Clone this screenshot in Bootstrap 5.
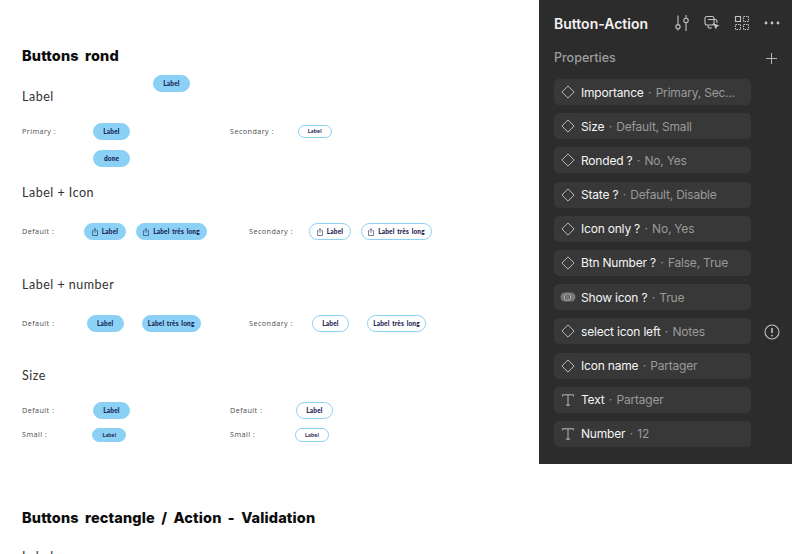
<!DOCTYPE html>
<html lang="fr">
<head>
  <meta charset="UTF-8"/>
  <meta name="viewport" content="width=device-width, initial-scale=1"/>
  <title>Button-Action</title>
  <link href="https://cdn.jsdelivr.net/npm/bootstrap@5.3.0/dist/css/bootstrap.min.css" rel="stylesheet">
  <style>
    html, body { height: 554px; overflow: hidden; background: #fff; }
    body { font-family: "Lato", "Liberation Sans", sans-serif; color: #333; }
    .board { width: 539px; padding: 47px 0 0 22px; flex: none; }

    /* headings */
    .sec-title { font-family: "Inter", "Liberation Sans", sans-serif; font-size: 14.5px; line-height: 18px; font-weight: 800; color: #0c0c0c; margin: 0; letter-spacing: .15px; word-spacing: 3px; }
    .sub-title { font-size: 12.5px; line-height: 16px; font-weight: 400; color: #333; margin: 0; letter-spacing: .5px; }
    .cap { font-family: "Open Sans", "Liberation Sans", sans-serif; font-size: 7.2px; font-weight: 400; color: #4c4c4c; letter-spacing: .45px; white-space: nowrap; }

    /* vertical rhythm of the board */
    .mt-10 { margin-top: 10px; }
    .mt-18 { margin-top: 18px; }
    .mt-19 { margin-top: 19px; }
    .mt-22 { margin-top: 22px; }
    .mt-37 { margin-top: 37px; }
    .mt-36 { margin-top: 36px; }
    .mt-9 { margin-top: 9px; }
    .mt-67 { margin-top: 67px; }
    .float-row { height: 30px; }
    .float-btn { margin-left: 95px; }
    .lbl-col { width: 36px; }

    /* column widths */
    .grp-a { width: 208px; }
    .grp-b { width: 227px; }
    .lc-71 { width: 71px; }
    .lc-70 { width: 70.3px; }
    .lc-62 { width: 62px; }
    .lc-65 { width: 64.7px; }
    .lc-68 { width: 68px; }
    .lc-60 { width: 60px; }
    .lc-63 { width: 63px; }
    .lc-66 { width: 66px; }
    .lc-65b { width: 65px; }
    .gap-10 { gap: 10px; }
    .gap-18 { gap: 18px; }

    /* pills */
    .pill { display: inline-flex; align-items: center; justify-content: center; gap: 4px; height: 17px; padding: 0; border-radius: 9px; font-size: 6.5px; font-weight: 900; letter-spacing: .15px; word-spacing: 1px; color: #1a2050; border: 1px solid #8ad1f5; white-space: nowrap; flex: none; }
    .pill:hover, .pill:active { color: #1a2050; }
    .pill-fill, .pill-fill:hover { background: #8ad1f5; }
    .pill-line, .pill-line:hover { background: #fff; }
    .pill-sm { height: 13.5px; font-size: 5.5px; font-weight: 700; border-radius: 7px; }
    .bw-37 { width: 37px; }
    .bw-33 { width: 33.5px; }
    .bw-34 { width: 34px; }
    .bw-42 { width: 42px; }
    .bw-71 { width: 71px; }
    .bw-59 { width: 59px; }
    .pill svg { width: 6px; height: 8px; }

    /* right panel */
    .panel { width: 253px; height: 464px; background: #2c2c2c; flex: none; padding: 0 15px; font-family: "Inter", "Liberation Sans", sans-serif; }
    .panel-head { height: 48px; padding-bottom: 2px; margin-right: -4px; }
    .panel-name { font-size: 14px; font-weight: 600; color: #f2f2f2; width: 119px; flex: none; }
    .head-ic { color: #c4c4c4; width: 18px; height: 18px; flex: none; }
    .head-gap { gap: 12px; }
    .panel-sub { height: 20px; font-size: 12.5px; font-weight: 500; color: #9d9d9d; margin-bottom: 11px; }
    .plus-ic { width: 13px; height: 13px; color: #b5b5b5; margin-right: -1px; }
    .prop-list { gap: 8.2px; width: 197px; }
    .prop-row { height: 26px; background: #383838; border-radius: 5px; padding-left: 6px; font-size: 12px; font-weight: 400; letter-spacing: -.2px; color: #f5f5f5; white-space: nowrap; position: relative; }
    .prop-txt { padding-top: 1px; }
    .prop-dot { color: #9a9a9a; padding-top: 1px; width: 12px; text-align: center; flex: none; }
    .prop-ic { width: 16px; height: 16px; color: #b8b8b8; margin-right: 5px; flex: none; }
    .prop-val { color: #9a9a9a; }
    .warn-ic { position: absolute; left: 209px; top: 5px; width: 18px; height: 18px; color: #c4c4c4; }
  </style>
</head>
<body>
  <div class="d-flex">
    <main class="board">
      <h2 class="sec-title">Buttons rond</h2>
      <div class="d-flex mt-10 float-row">
        <h3 class="sub-title lbl-col align-self-end">Label</h3>
        <button class="btn pill pill-fill bw-37 float-btn align-self-start">Label</button>
      </div>

      <div class="d-flex align-items-center mt-18">
        <div class="d-flex align-items-center grp-a"><span class="cap lc-71">Primary :</span><button class="btn pill pill-fill bw-37">Label</button></div>
        <div class="d-flex align-items-center"><span class="cap lc-68">Secondary :</span><button class="btn pill pill-line pill-sm bw-33">Label</button></div>
      </div>
      <div class="d-flex align-items-center mt-10">
        <span class="lc-71"></span><button class="btn pill pill-fill bw-37">done</button>
      </div>

      <h3 class="sub-title mt-18">Label + Icon</h3>
      <div class="d-flex align-items-center mt-22">
        <div class="d-flex align-items-center grp-b">
          <span class="cap lc-62">Default :</span>
          <div class="d-flex gap-10">
            <button class="btn pill pill-fill bw-42"><svg viewBox="0 0 7 9" fill="none" stroke="currentColor" stroke-width=".7"><path d="M2 3H.5v5.500h6V3H5M3.500 5.500V.6M2.200 1.800 3.500.6l1.300 1.200"/></svg>Label</button>
            <button class="btn pill pill-fill bw-71"><svg viewBox="0 0 7 9" fill="none" stroke="currentColor" stroke-width=".7"><path d="M2 3H.5v5.500h6V3H5M3.500 5.500V.6M2.200 1.800 3.500.6l1.300 1.200"/></svg>Label très long</button>
          </div>
        </div>
        <div class="d-flex align-items-center">
          <span class="cap lc-60">Secondary :</span>
          <div class="d-flex gap-10">
            <button class="btn pill pill-line bw-42"><svg viewBox="0 0 7 9" fill="none" stroke="currentColor" stroke-width=".7"><path d="M2 3H.5v5.500h6V3H5M3.500 5.500V.6M2.200 1.800 3.500.6l1.300 1.200"/></svg>Label</button>
            <button class="btn pill pill-line bw-71"><svg viewBox="0 0 7 9" fill="none" stroke="currentColor" stroke-width=".7"><path d="M2 3H.5v5.500h6V3H5M3.500 5.500V.6M2.200 1.800 3.500.6l1.300 1.200"/></svg>Label très long</button>
          </div>
        </div>
      </div>

      <h3 class="sub-title mt-37">Label + number</h3>
      <div class="d-flex align-items-center mt-22">
        <div class="d-flex align-items-center grp-b">
          <span class="cap lc-65">Default :</span>
          <div class="d-flex gap-18">
            <button class="btn pill pill-fill bw-37">Label</button>
            <button class="btn pill pill-fill bw-59">Label très long</button>
          </div>
        </div>
        <div class="d-flex align-items-center">
          <span class="cap lc-63">Secondary :</span>
          <div class="d-flex gap-18">
            <button class="btn pill pill-line bw-37">Label</button>
            <button class="btn pill pill-line bw-59">Label très long</button>
          </div>
        </div>
      </div>

      <h3 class="sub-title mt-36">Size</h3>
      <div class="d-flex align-items-center mt-18">
        <div class="d-flex align-items-center grp-a"><span class="cap lc-71">Default :</span><button class="btn pill pill-fill bw-37">Label</button></div>
        <div class="d-flex align-items-center"><span class="cap lc-66">Default :</span><button class="btn pill pill-line bw-37">Label</button></div>
      </div>
      <div class="d-flex align-items-center mt-9">
        <div class="d-flex align-items-center grp-a"><span class="cap lc-70">Small :</span><button class="btn pill pill-fill pill-sm bw-34">Label</button></div>
        <div class="d-flex align-items-center"><span class="cap lc-65b">Small :</span><button class="btn pill pill-line pill-sm bw-34">Label</button></div>
      </div>

      <h2 class="sec-title mt-67">Buttons rectangle / Action - Validation</h2>
      <h3 class="sub-title mt-22">Label</h3>
    </main>

    <aside class="panel">
      <div class="d-flex align-items-center panel-head">
        <span class="panel-name">Button-Action</span>
        <div class="d-flex align-items-center head-gap">
          <svg class="head-ic" viewBox="0 0 18 18" fill="none" stroke="currentColor" stroke-width="1.100"><path d="M5 1.500v9M5 15v1.500M13 1v3M13 9v8"/><circle cx="5" cy="12.700" r="2.100"/><circle cx="13" cy="6.500" r="2.200"/></svg>
          <svg class="head-ic" viewBox="0 0 18 18" fill="none" stroke="currentColor" stroke-width="1.100"><rect x="2" y="2.500" width="9" height="8.500" rx="2"/><path d="M5 11.500v.5a2 2 0 0 0 2 2h2M14 9V7.500a2 2 0 0 0-2-2H5"/><path d="M10 9l6.500 2.800-2.600 1-1 2.700z" fill="currentColor" stroke="none"/></svg>
          <svg class="head-ic" viewBox="0 0 18 18" fill="none" stroke="currentColor" stroke-width="1.100"><rect x="2.500" y="2.500" width="5" height="5"/><rect x="10.500" y="2.500" width="5" height="5" stroke-dasharray="1.500 1"/><rect x="2.500" y="10.500" width="5" height="5" stroke-dasharray="1.500 1"/><rect x="10.500" y="10.500" width="5" height="5" stroke-dasharray="1.500 1"/></svg>
          <svg class="head-ic" viewBox="0 0 18 18" fill="currentColor"><circle cx="3" cy="9" r="1.400"/><circle cx="9" cy="9" r="1.400"/><circle cx="15" cy="9" r="1.400"/></svg>
        </div>
      </div>
      <div class="d-flex align-items-center justify-content-between panel-sub">
        <span>Properties</span>
        <svg class="plus-ic" viewBox="0 0 13 13" fill="none" stroke="currentColor"><path d="M6.500 1v11M1 6.500h11"/></svg>
      </div>
      <div class="d-flex flex-column prop-list" id="props"></div>
    </aside>
  </div>

  <script src="https://cdn.jsdelivr.net/npm/bootstrap@5.3.0/dist/js/bootstrap.bundle.min.js"></script>
  <script>
    const icons = {
      diamond: '<path d="M8 1.900 14.100 8 8 14.100 1.900 8z"/>',
      toggle: '<rect x="0.500" y="3.500" width="15" height="9" rx="4.500" fill="#777" stroke="none"/><circle cx="7.500" cy="8" r="3.200" fill="#383838"/><circle cx="7.500" cy="8" r="2.200" fill="#777" stroke="none"/>',
      text: '<path d="M2.500 4.300V2.800h11v1.500M8 2.800v10.400M6 13.200h4"/>'
    };
    const props = [
      ['diamond', 'Importance', 'Primary, Sec...'],
      ['diamond', 'Size', 'Default, Small'],
      ['diamond', 'Ronded ?', 'No, Yes'],
      ['diamond', 'State ?', 'Default, Disable'],
      ['diamond', 'Icon only ?', 'No, Yes'],
      ['diamond', 'Btn Number ?', 'False, True'],
      ['toggle', 'Show icon ?', 'True'],
      ['diamond', 'select icon left', 'Notes', true],
      ['diamond', 'Icon name', 'Partager'],
      ['text', 'Text', 'Partager'],
      ['text', 'Number', '12']
    ];
    const warn = '<svg class="warn-ic" viewBox="0 0 18 18" fill="none" stroke="currentColor" stroke-width="1.100"><circle cx="9" cy="9" r="7"/><path d="M9 5v5" stroke-width="1.600"/><circle cx="9" cy="12.600" r=".9" fill="currentColor" stroke="none"/></svg>';
    document.getElementById('props').innerHTML = props.map(p => `
      <div class="d-flex align-items-center prop-row">
        <svg class="prop-ic" viewBox="0 0 16 16" fill="none" stroke="currentColor">${icons[p[0]]}</svg>
        <span class="prop-txt">${p[1]}</span><span class="prop-dot">·</span><span class="prop-val prop-txt">${p[2]}</span>
        ${p[3] ? warn : ''}
      </div>`).join('');
  </script>
</body>
</html>
